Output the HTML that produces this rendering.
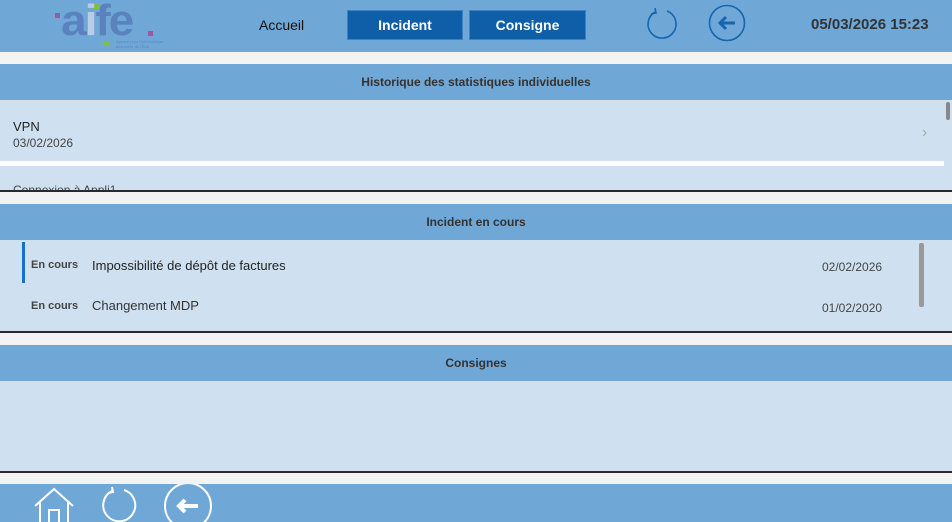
<!DOCTYPE html>
<html><head><meta charset="utf-8"><style>
*{margin:0;padding:0;box-sizing:border-box}
body{width:952px;height:522px;overflow:hidden;background:#f3f3f3;font-family:"Liberation Sans",sans-serif;position:relative;color:#222}
.a{position:absolute}
.blue{background:#6fa8d7}
.light{background:#cfe1f1}
.hd{font-size:12px;font-weight:bold;color:#333;text-align:center;line-height:36px}
.line{background:#2a2a2a;height:2px}
.btn{background:#0e5fa8;color:#fff;font-weight:bold;font-size:14px;text-align:center;line-height:29px;border:1px solid #3d82c4}
</style></head><body>
<div class="a blue" style="left:0;top:0;width:952px;height:52px"></div>
<!-- logo -->
<div class="a" style="left:55px;top:13px;width:5px;height:5px;background:#9b5aa0"></div>
<div class="a" style="left:93px;top:3px;width:6px;height:6px;background:#7cc142"></div>
<div class="a" style="left:103px;top:41px;width:6px;height:5px;background:#7cc142"></div>
<div class="a" style="left:148px;top:31px;width:5px;height:5px;background:#9b5aa0"></div>
<div class="a" style="left:61px;top:-4px;font:bold 44px 'Liberation Sans',sans-serif;color:#5b82bf;letter-spacing:-2px;transform:scaleX(1.05);transform-origin:left">a<span style="color:#b9cbe8">i</span>fe</div>
<div class="a" style="left:116px;top:39px;font-size:4px;color:#5b86c2;line-height:5px">agence pour l'informatique<br>financière de l'État</div>
<div class="a" style="left:259px;top:17px;font-size:14px;color:#111">Accueil</div>
<div class="a btn" style="left:347px;top:10px;width:116px;height:30px">Incident</div>
<div class="a btn" style="left:469px;top:10px;width:117px;height:30px">Consigne</div>
<svg class="a" style="left:645px;top:5px" width="34" height="36" viewBox="0 0 34 36"><path d="M10 7 A14 14 0 1 0 22 6" fill="none" stroke="#1565b0" stroke-width="1.6"/><path d="M10 3 L11 8 L6 9" fill="none" stroke="#1565b0" stroke-width="1.6"/></svg>
<svg class="a" style="left:708px;top:4px" width="38" height="38" viewBox="0 0 38 38"><circle cx="19" cy="19" r="17.5" fill="none" stroke="#1565b0" stroke-width="1.6"/><path d="M27 19H12M18 13l-6 6 6 6" fill="none" stroke="#1565b0" stroke-width="3"/></svg>
<div class="a" style="left:811px;top:16px;font-size:15px;font-weight:bold;color:#333">05/03/2026 15:23</div>

<div class="a blue hd" style="left:0;top:64px;width:952px;height:36px">Historique des statistiques individuelles</div>
<div class="a light" style="left:0;top:100px;width:952px;height:91px;overflow:hidden">
 <div class="a" style="left:13px;top:19px;font-size:13px;color:#222">VPN</div>
 <div class="a" style="left:13px;top:36px;font-size:12px;color:#444">03/02/2026</div>
 <div class="a" style="left:922px;top:24px;font-size:16px;color:#aaa">›</div>
 <div class="a" style="left:0;top:61px;width:944px;height:5px;background:#fff"></div>
 <div class="a" style="left:13px;top:83px;font-size:12px;color:#444">Connexion à Appli1</div>
 <div class="a" style="left:946px;top:2px;width:4px;height:18px;background:#888;border-radius:2px"></div>
</div>
<div class="a line" style="left:0;top:190px;width:952px"></div>

<div class="a blue hd" style="left:0;top:204px;width:952px;height:36px">Incident en cours</div>
<div class="a light" style="left:0;top:240px;width:952px;height:91px">
 <div class="a" style="left:22px;top:2px;width:3px;height:41px;background:#1570cf"></div>
 <div class="a" style="left:31px;top:19px;font-size:11px;color:#444;font-weight:bold">En cours</div>
 <div class="a" style="left:92px;top:18px;font-size:13px;color:#222">Impossibilité de dépôt de factures</div>
 <div class="a" style="left:822px;top:20px;font-size:12px;color:#444">02/02/2026</div>
 <div class="a" style="left:31px;top:60px;font-size:11px;color:#444;font-weight:bold">En cours</div>
 <div class="a" style="left:92px;top:58px;font-size:13px;color:#333">Changement MDP</div>
 <div class="a" style="left:822px;top:61px;font-size:12px;color:#444">01/02/2020</div>
 <div class="a" style="left:919px;top:3px;width:5px;height:64px;background:#999;border-radius:2px"></div>
</div>
<div class="a line" style="left:0;top:331px;width:952px"></div>

<div class="a blue hd" style="left:0;top:345px;width:952px;height:36px">Consignes</div>
<div class="a light" style="left:0;top:381px;width:952px;height:90px"></div>
<div class="a line" style="left:0;top:471px;width:952px"></div>

<div class="a blue" style="left:0;top:484px;width:952px;height:38px"></div>
<svg class="a" style="left:33px;top:487px" width="42" height="35" viewBox="0 0 42 35"><path d="M2 19L21 2 40 19M7 15V35M35 15V35M16 35V23H26V35" fill="none" stroke="#fff" stroke-width="2"/></svg>
<svg class="a" style="left:100px;top:484px" width="38" height="38" viewBox="0 0 38 38"><path d="M12 7 A16 16 0 1 0 24 6" fill="none" stroke="#fff" stroke-width="2"/><path d="M12 3 L13 8 L8 9" fill="none" stroke="#fff" stroke-width="2"/></svg>
<svg class="a" style="left:162px;top:484px" width="52" height="38" viewBox="0 0 52 38"><circle cx="26" cy="22" r="23" fill="none" stroke="#fff" stroke-width="2"/><path d="M36 22H17M23 16l-6 6 6 6" fill="none" stroke="#fff" stroke-width="4"/></svg>
</body></html>
